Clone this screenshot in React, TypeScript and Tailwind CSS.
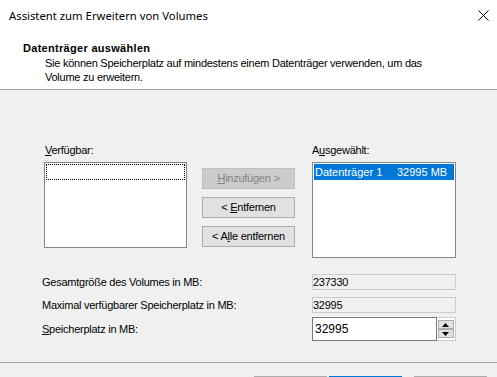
import React from "react";

const Btn = ({ children, disabled }: { children: React.ReactNode; disabled?: boolean }) => (
  <div
    className={
      "h-[21px] w-[93px] flex items-center justify-center border " +
      (disabled
        ? "bg-[#cccccc] border-[#bfbfbf] text-[#838383]"
        : "bg-[#e1e1e1] border-[#adadad] text-black")
    }
  >
    {children}
  </div>
);

export default function App() {
  return (
    <div
      className="w-[497px] h-[377px] overflow-hidden bg-[#f0f0f0] text-black flex flex-col tracking-[-0.25px]"
      style={{ fontFamily: '"Liberation Sans", Arial, sans-serif', fontSize: "11px" }}
    >
      {/* white top */}
      <div className="bg-white shrink-0">
        <div className="h-[31px] flex items-center justify-between pl-[9px] pr-[8px]">
          <span
            className="text-[11.3px] leading-[16px] tracking-normal"
            style={{ fontFamily: '"Noto Sans", "Open Sans", sans-serif' }}
          >
            Assistent zum Erweitern von Volumes
          </span>
          <svg width="11" height="11" viewBox="0 0 11 11">
            <path d="M0.5 0.5 L10.5 10.5 M10.5 0.5 L0.5 10.5" stroke="#000" strokeWidth="1" />
          </svg>
        </div>
        <div className="h-[59px] border-b border-[#a0a0a0] pt-[10px]">
          <div className="pl-[23px] font-bold leading-[14px] tracking-[0.3px]">Datenträger auswählen</div>
          <div className="pl-[45px] leading-[14px] pt-[1px]">
            Sie können Speicherplatz auf mindestens einem Datenträger verwenden, um das
            <br />
            Volume zu erweitern.
          </div>
        </div>
      </div>

      {/* body */}
      <div className="flex-1 flex flex-col">
        <div className="flex items-start pt-[54px] pl-[44px]">
          {/* left */}
          <div className="flex flex-col w-[143px]">
            <div className="leading-[13px] pl-[1px]">
              <span className="underline">V</span>erfügbar:
            </div>
            <div className="mt-[5px] h-[86px] bg-white border border-[#828790] p-[1px]">
              <div className="h-[16px] border border-dotted border-black" />
            </div>
          </div>
          {/* middle */}
          <div className="flex flex-col gap-[8px] ml-[15px] pt-[24px]">
            <Btn disabled>
              <span>
                <span className="underline">H</span>inzufügen &gt;
              </span>
            </Btn>
            <Btn>
              <span>
                &lt; <span className="underline">E</span>ntfernen
              </span>
            </Btn>
            <Btn>
              <span>
                &lt; A<span className="underline">l</span>le entfernen
              </span>
            </Btn>
          </div>
          {/* right */}
          <div className="flex flex-col w-[144px] ml-[17px]">
            <div className="leading-[13px]">
              A<span className="underline">u</span>sgewählt:
            </div>
            <div className="mt-[5px] h-[96px] bg-white border border-[#828790] p-[1px]">
              <div className="h-[16px] bg-[#0078d7] text-white flex items-center pl-[1px] leading-[13px] tracking-normal">
                <span className="w-[82px]">Datenträger 1</span>
                <span>32995 MB</span>
              </div>
            </div>
          </div>
        </div>

        {/* fields */}
        <div className="flex flex-col pl-[42px] mt-[16px]">
          <div className="flex items-center h-[16px]">
            <div className="w-[270px] leading-[13px]">Gesamtgröße des Volumes in MB:</div>
            <div className="w-[144px] h-[16px] border border-[#cccccc] bg-[#f0f0f0] flex items-center leading-[13px]">
              237330
            </div>
          </div>
          <div className="flex items-center h-[16px] mt-[7px]">
            <div className="w-[270px] leading-[13px]">Maximal verfügbarer Speicherplatz in MB:</div>
            <div className="w-[144px] h-[16px] border border-[#cccccc] bg-[#f0f0f0] flex items-center leading-[13px]">
              32995
            </div>
          </div>
          <div className="flex items-center h-[24px] mt-[4px]">
            <div className="w-[270px] leading-[13px]">
              <span className="underline">S</span>peicherplatz in MB:
            </div>
            <div className="w-[144px] h-[24px] flex">
              <div className="flex-1 h-full border border-[#7a7a7a] bg-white flex items-center pl-[2px] leading-[13px] text-[12px] tracking-normal">
                32995
              </div>
              <div className="w-[19px] h-full border border-l-0 border-[#cccccc] bg-white flex flex-col items-center justify-center py-[2px] pr-[1px]">
                <div className="w-[16px] h-[9px] bg-[#e1e1e1] border border-[#adadad] flex items-center justify-center">
                  <svg width="7" height="4" viewBox="0 0 7 4">
                    <path d="M3.5 0 L7 4 L0 4 Z" fill="#000" />
                  </svg>
                </div>
                <div className="w-[16px] h-[9px] bg-[#e1e1e1] border border-[#adadad] flex items-center justify-center">
                  <svg width="7" height="4" viewBox="0 0 7 4">
                    <path d="M0 0 L7 0 L3.5 4 Z" fill="#000" />
                  </svg>
                </div>
              </div>
            </div>
          </div>
        </div>

        <div className="mt-[21px] border-t border-[#a0a0a0]" />
        <div className="flex justify-end pr-[10px] mt-[13px]">
          <div className="w-[73px] h-[23px] border border-[#adadad] bg-[#e1e1e1]" />
          <div className="w-[73px] h-[23px] border border-[#0078d7] bg-[#e1e1e1] ml-[2px]" />
          <div className="w-[73px] h-[23px] border border-[#adadad] bg-[#e1e1e1] ml-[12px]" />
        </div>
      </div>
    </div>
  );
}
